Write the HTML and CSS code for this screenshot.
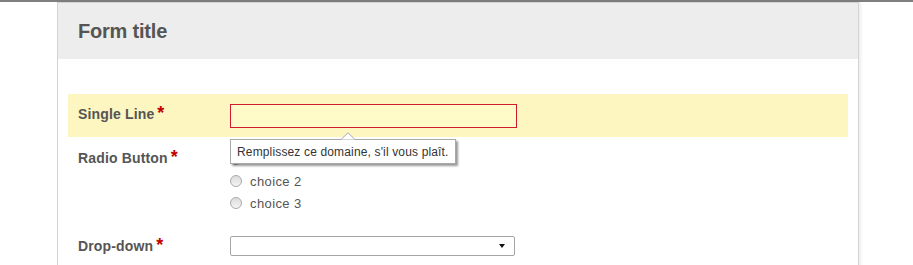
FILE: index.html
```html
<!DOCTYPE html>
<html lang="fr">
<head>
<meta charset="utf-8">
<title>Form</title>
<link rel="stylesheet" href="styles.css">
</head>
<body>
<div class="topbar"></div>
<div class="form">
  <div class="head"><h1 class="title">Form title</h1></div>
  <div class="body">
    <div class="row row-hl">
      <label class="lbl">Single Line<span class="req">*</span></label>
      <div class="field">
        <input class="text" type="text">
        <div class="tip">
          <svg class="tip-arrow" width="16" height="8" viewBox="0 0 16 8"><polygon points="0.5,8 8,0.8 15.5,8" fill="#fff" stroke="#a8a8a8" stroke-width="1"/></svg>
          Remplissez ce domaine, s'il vous plaît.
        </div>
      </div>
    </div>
    <div class="row row-radio">
      <label class="lbl">Radio Button<span class="req">*</span></label>
      <div class="field radios">
        <label class="opt"><span class="dot"></span>choice 1</label>
        <label class="opt"><span class="dot"></span>choice 2</label>
        <label class="opt"><span class="dot"></span>choice 3</label>
      </div>
    </div>
    <div class="row row-dd">
      <label class="lbl">Drop-down<span class="req">*</span></label>
      <div class="field">
        <div class="select">
          <svg width="6" height="4" viewBox="0 0 6 4"><polygon points="0,0 6,0 3,4" fill="#111"/></svg>
        </div>
      </div>
    </div>
  </div>
</div>
</body>
</html>
```
FILE: styles.css
```css
html, body {
  margin: 0;
  padding: 0;
  background: #fff;
  font-family: "Liberation Sans", Arial, sans-serif;
  height: 100%;
  overflow: hidden;
}
.topbar {
  height: 2px;
  background: #7f7f7f;
}
.form {
  margin-left: 57px;
  width: 800px;
  border: 1px solid #d3d3d3;
  border-bottom: none;
  box-shadow: 2px 0 3px rgba(0, 0, 0, 0.07);
  min-height: 400px;
  background: #fff;
}
.head {
  height: 56px;
  background: #ededed;
  display: flex;
  align-items: center;
  padding: 0 20px;
}
.title {
  margin: 0;
  font-size: 20px;
  font-weight: bold;
  color: #555;
  letter-spacing: -0.2px;
}
.body {
  padding: 35px 10px 0;
}
.row {
  display: grid;
  grid-template-columns: 162px 1fr;
  padding: 10px 0 10px;
}
.row-hl {
  background: #fdf6c1;
  padding-bottom: 9px;
}
.row-radio {
  padding-top: 11px;
  padding-bottom: 12px;
}
.lbl {
  padding-left: 10px;
  font-size: 14px;
  font-weight: bold;
  color: #555;
  line-height: 20px;
  letter-spacing: 0.15px;
}
.req {
  color: #c00000;
  font-size: 18px;
  margin-left: 3px;
  line-height: 10px;
  vertical-align: top;
  position: relative;
  top: 4px;
}
.field {
  position: relative;
}
.text {
  display: block;
  box-sizing: border-box;
  width: 287px;
  height: 24px;
  margin: 0;
  border: 1px solid #cf1b2e;
  background: #fffbc8;
  outline: none;
  padding: 0 4px;
}
.tip {
  position: absolute;
  left: 0;
  top: 35px;
  box-sizing: border-box;
  width: 226px;
  height: 25px;
  background: #fff;
  border: 1px solid #a8a8a8;
  box-shadow: 2px 2px 2px rgba(0, 0, 0, 0.4);
  font-size: 12px;
  letter-spacing: 0.15px;
  color: #333;
  line-height: 24px;
  padding-left: 6px;
  white-space: nowrap;
  z-index: 2;
}
.tip-arrow {
  position: absolute;
  left: 109px;
  top: -8px;
  display: block;
}
.radios {
  display: flex;
  flex-direction: column;
}
.opt {
  display: flex;
  align-items: center;
  height: 22px;
  font-size: 13px;
  letter-spacing: 0.4px;
  color: #555;
}
.dot {
  width: 10px;
  height: 10px;
  border-radius: 50%;
  border: 1px solid #a9a9a9;
  background: linear-gradient(#dcdcdc, #f4f4f4);
  margin-right: 8px;
}
.select {
  box-sizing: border-box;
  width: 285px;
  height: 20px;
  border: 1px solid #a6a6a6;
  border-radius: 2px;
  background: #fff;
  display: flex;
  align-items: center;
  justify-content: flex-end;
  padding-right: 9px;
}
.select svg {
  display: block;
}
```
